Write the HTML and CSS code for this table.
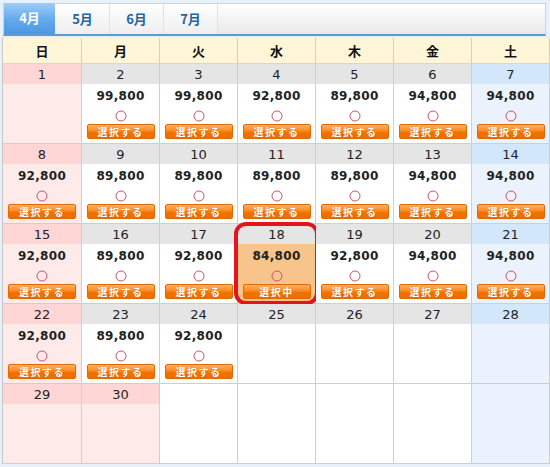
FILE: index.html
```html
<!DOCTYPE html>
<html lang="ja">
<head>
<meta charset="utf-8">
<link rel="stylesheet" href="styles.css">
</head>
<body>
<div class="wrap">
  <div class="tabs">
    <div class="tab active">4月</div>
    <div class="tab">5月</div>
    <div class="tab">6月</div>
    <div class="tab">7月</div>
  </div>
  <div class="cal">
    <div class="hd">日</div><div class="hd">月</div><div class="hd">火</div><div class="hd">水</div><div class="hd">木</div><div class="hd">金</div><div class="hd">土</div>

    <div class="day sun"><div class="dt">1</div><div class="bd"></div></div>
    <div class="day"><div class="dt">2</div><div class="bd"><div class="pr">99,800</div><div class="mk"><svg width="12" height="12" viewBox="0 0 12 12"><circle cx="6" cy="6" r="5" fill="none" stroke="#d0506e" stroke-width="1"/></svg></div><div class="btn">選択する</div></div></div>
    <div class="day"><div class="dt">3</div><div class="bd"><div class="pr">99,800</div><div class="mk"><svg width="12" height="12" viewBox="0 0 12 12"><circle cx="6" cy="6" r="5" fill="none" stroke="#d0506e" stroke-width="1"/></svg></div><div class="btn">選択する</div></div></div>
    <div class="day"><div class="dt">4</div><div class="bd"><div class="pr">92,800</div><div class="mk"><svg width="12" height="12" viewBox="0 0 12 12"><circle cx="6" cy="6" r="5" fill="none" stroke="#d0506e" stroke-width="1"/></svg></div><div class="btn">選択する</div></div></div>
    <div class="day"><div class="dt">5</div><div class="bd"><div class="pr">89,800</div><div class="mk"><svg width="12" height="12" viewBox="0 0 12 12"><circle cx="6" cy="6" r="5" fill="none" stroke="#d0506e" stroke-width="1"/></svg></div><div class="btn">選択する</div></div></div>
    <div class="day"><div class="dt">6</div><div class="bd"><div class="pr">94,800</div><div class="mk"><svg width="12" height="12" viewBox="0 0 12 12"><circle cx="6" cy="6" r="5" fill="none" stroke="#d0506e" stroke-width="1"/></svg></div><div class="btn">選択する</div></div></div>
    <div class="day sat"><div class="dt">7</div><div class="bd"><div class="pr">94,800</div><div class="mk"><svg width="12" height="12" viewBox="0 0 12 12"><circle cx="6" cy="6" r="5" fill="none" stroke="#d0506e" stroke-width="1"/></svg></div><div class="btn">選択する</div></div></div>

    <div class="day sun"><div class="dt">8</div><div class="bd"><div class="pr">92,800</div><div class="mk"><svg width="12" height="12" viewBox="0 0 12 12"><circle cx="6" cy="6" r="5" fill="none" stroke="#d0506e" stroke-width="1"/></svg></div><div class="btn">選択する</div></div></div>
    <div class="day"><div class="dt">9</div><div class="bd"><div class="pr">89,800</div><div class="mk"><svg width="12" height="12" viewBox="0 0 12 12"><circle cx="6" cy="6" r="5" fill="none" stroke="#d0506e" stroke-width="1"/></svg></div><div class="btn">選択する</div></div></div>
    <div class="day"><div class="dt">10</div><div class="bd"><div class="pr">89,800</div><div class="mk"><svg width="12" height="12" viewBox="0 0 12 12"><circle cx="6" cy="6" r="5" fill="none" stroke="#d0506e" stroke-width="1"/></svg></div><div class="btn">選択する</div></div></div>
    <div class="day"><div class="dt">11</div><div class="bd"><div class="pr">89,800</div><div class="mk"><svg width="12" height="12" viewBox="0 0 12 12"><circle cx="6" cy="6" r="5" fill="none" stroke="#d0506e" stroke-width="1"/></svg></div><div class="btn">選択する</div></div></div>
    <div class="day"><div class="dt">12</div><div class="bd"><div class="pr">89,800</div><div class="mk"><svg width="12" height="12" viewBox="0 0 12 12"><circle cx="6" cy="6" r="5" fill="none" stroke="#d0506e" stroke-width="1"/></svg></div><div class="btn">選択する</div></div></div>
    <div class="day"><div class="dt">13</div><div class="bd"><div class="pr">94,800</div><div class="mk"><svg width="12" height="12" viewBox="0 0 12 12"><circle cx="6" cy="6" r="5" fill="none" stroke="#d0506e" stroke-width="1"/></svg></div><div class="btn">選択する</div></div></div>
    <div class="day sat"><div class="dt">14</div><div class="bd"><div class="pr">94,800</div><div class="mk"><svg width="12" height="12" viewBox="0 0 12 12"><circle cx="6" cy="6" r="5" fill="none" stroke="#d0506e" stroke-width="1"/></svg></div><div class="btn">選択する</div></div></div>

    <div class="day sun"><div class="dt">15</div><div class="bd"><div class="pr">92,800</div><div class="mk"><svg width="12" height="12" viewBox="0 0 12 12"><circle cx="6" cy="6" r="5" fill="none" stroke="#d0506e" stroke-width="1"/></svg></div><div class="btn">選択する</div></div></div>
    <div class="day"><div class="dt">16</div><div class="bd"><div class="pr">89,800</div><div class="mk"><svg width="12" height="12" viewBox="0 0 12 12"><circle cx="6" cy="6" r="5" fill="none" stroke="#d0506e" stroke-width="1"/></svg></div><div class="btn">選択する</div></div></div>
    <div class="day"><div class="dt">17</div><div class="bd"><div class="pr">92,800</div><div class="mk"><svg width="12" height="12" viewBox="0 0 12 12"><circle cx="6" cy="6" r="5" fill="none" stroke="#d0506e" stroke-width="1"/></svg></div><div class="btn">選択する</div></div></div>
    <div class="day selected"><div class="dt">18</div><div class="bd"><div class="pr">84,800</div><div class="mk"><svg width="12" height="12" viewBox="0 0 12 12"><circle cx="6" cy="6" r="5" fill="none" stroke="#d0506e" stroke-width="1"/></svg></div><div class="btn">選択中</div></div><div class="ring"></div></div>
    <div class="day"><div class="dt">19</div><div class="bd"><div class="pr">92,800</div><div class="mk"><svg width="12" height="12" viewBox="0 0 12 12"><circle cx="6" cy="6" r="5" fill="none" stroke="#d0506e" stroke-width="1"/></svg></div><div class="btn">選択する</div></div></div>
    <div class="day"><div class="dt">20</div><div class="bd"><div class="pr">94,800</div><div class="mk"><svg width="12" height="12" viewBox="0 0 12 12"><circle cx="6" cy="6" r="5" fill="none" stroke="#d0506e" stroke-width="1"/></svg></div><div class="btn">選択する</div></div></div>
    <div class="day sat"><div class="dt">21</div><div class="bd"><div class="pr">94,800</div><div class="mk"><svg width="12" height="12" viewBox="0 0 12 12"><circle cx="6" cy="6" r="5" fill="none" stroke="#d0506e" stroke-width="1"/></svg></div><div class="btn">選択する</div></div></div>

    <div class="day sun"><div class="dt">22</div><div class="bd"><div class="pr">92,800</div><div class="mk"><svg width="12" height="12" viewBox="0 0 12 12"><circle cx="6" cy="6" r="5" fill="none" stroke="#d0506e" stroke-width="1"/></svg></div><div class="btn">選択する</div></div></div>
    <div class="day"><div class="dt">23</div><div class="bd"><div class="pr">89,800</div><div class="mk"><svg width="12" height="12" viewBox="0 0 12 12"><circle cx="6" cy="6" r="5" fill="none" stroke="#d0506e" stroke-width="1"/></svg></div><div class="btn">選択する</div></div></div>
    <div class="day"><div class="dt">24</div><div class="bd"><div class="pr">92,800</div><div class="mk"><svg width="12" height="12" viewBox="0 0 12 12"><circle cx="6" cy="6" r="5" fill="none" stroke="#d0506e" stroke-width="1"/></svg></div><div class="btn">選択する</div></div></div>
    <div class="day"><div class="dt">25</div><div class="bd"></div></div>
    <div class="day"><div class="dt">26</div><div class="bd"></div></div>
    <div class="day"><div class="dt">27</div><div class="bd"></div></div>
    <div class="day sat"><div class="dt">28</div><div class="bd"></div></div>

    <div class="day sun"><div class="dt">29</div><div class="bd"></div></div>
    <div class="day sun"><div class="dt">30</div><div class="bd"></div></div>
    <div class="day empty"><div class="bd"></div></div>
    <div class="day empty"><div class="bd"></div></div>
    <div class="day empty"><div class="bd"></div></div>
    <div class="day empty"><div class="bd"></div></div>
    <div class="day sat empty"><div class="bd"></div></div>
  </div>
</div>
</body>
</html>
```

FILE: styles.css
```css
* { box-sizing: border-box; }
html, body {
  margin: 0;
  padding: 0;
  background: #e8f0f9;
}
body {
  width: 550px;
  height: 467px;
  overflow: hidden;
  font-family: "DejaVu Sans", "Noto Sans CJK JP", sans-serif;
  color: #222;
}
.wrap {
  padding: 3px 2px 0 2px;
}
.tabs {
  display: flex;
  height: 33px;
  margin: 0 2px 0 1px;
  background: linear-gradient(#ffffff, #e9e9e9);
  border: 1px solid #d4d4d4;
  border-bottom: 2px solid #5d9ad3;
}
.tab {
  width: 54px;
  display: flex;
  align-items: center;
  justify-content: center;
  font-family: "Noto Sans CJK JP", sans-serif;
  font-weight: bold;
  font-size: 13px;
  color: #22649f;
  border-right: 1px solid #e2e2e2;
  background: linear-gradient(#ffffff, #eeeeee);
  padding-bottom: 2px;
}
.tab.active {
  width: 51px;
  color: #fff;
  background: linear-gradient(#9fcdf6, #62a8ec 55%, #4d98e2);
  border-right: none;
  margin-top: -1px;
  margin-right: 1px;
}
.cal {
  margin-top: 2px;
  display: grid;
  grid-template-columns: 79px repeat(6, 78px);
  width: 547px;
  border-left: 1px solid #c8c8c8;
}
.hd {
  height: 26px;
  background: #fff6d8;
  border-right: 1px solid #d6d0b8;
  border-bottom: 1px solid #ddd6c0;
  display: flex;
  align-items: center;
  justify-content: center;
  font-family: "Noto Sans CJK JP", sans-serif;
  font-weight: bold;
  font-size: 13px;
  color: #111;
}
.day {
  position: relative;
  height: 80px;
  display: flex;
  flex-direction: column;
  border-right: 1px solid #cfcfcf;
  border-bottom: 1px solid #cfcfcf;
}
.dt {
  height: 20px;
  flex: none;
  background: #e5e5e5;
  display: flex;
  align-items: center;
  justify-content: center;
  font-size: 13px;
  color: #222;
}
.bd {
  flex: 1;
  background: #fff;
  display: flex;
  flex-direction: column;
  align-items: center;
  padding-top: 4px;
}
.sun .dt { background: #ffd6d6; }
.sun .bd { background: #ffeaea; }
.sat .dt { background: #d3e7fb; }
.sat .bd { background: #eaf3fd; }
.empty .bd { background: #fff; }
.sat.empty .bd { background: #eaf3fd; }
.selected .bd { background: #f7c58c; }
.pr {
  font-weight: bold;
  font-size: 12px;
  line-height: 16px;
  color: #222;
  letter-spacing: 0.3px;
}
.mk {
  height: 14px;
  margin-top: 5px;
  display: flex;
  align-items: center;
}
.btn {
  margin-top: 1px;
  width: 68px;
  height: 15px;
  border-radius: 2px;
  background: linear-gradient(#ffb066, #ff8a1e 45%, #f07300 55%, #ee6c00);
  border: 1px solid #e06a00;
  color: #fff;
  font-family: "Noto Sans CJK JP", sans-serif;
  font-weight: bold;
  font-size: 10px;
  line-height: 13px;
  text-align: center;
  letter-spacing: 1.5px;
  text-shadow: 0 0 1px #c05000;
}
.ring {
  position: absolute;
  left: -4px;
  right: -4px;
  top: -2px;
  bottom: -2px;
  border: 4px solid #e3141e;
  border-radius: 12px;
  pointer-events: none;
}
```
